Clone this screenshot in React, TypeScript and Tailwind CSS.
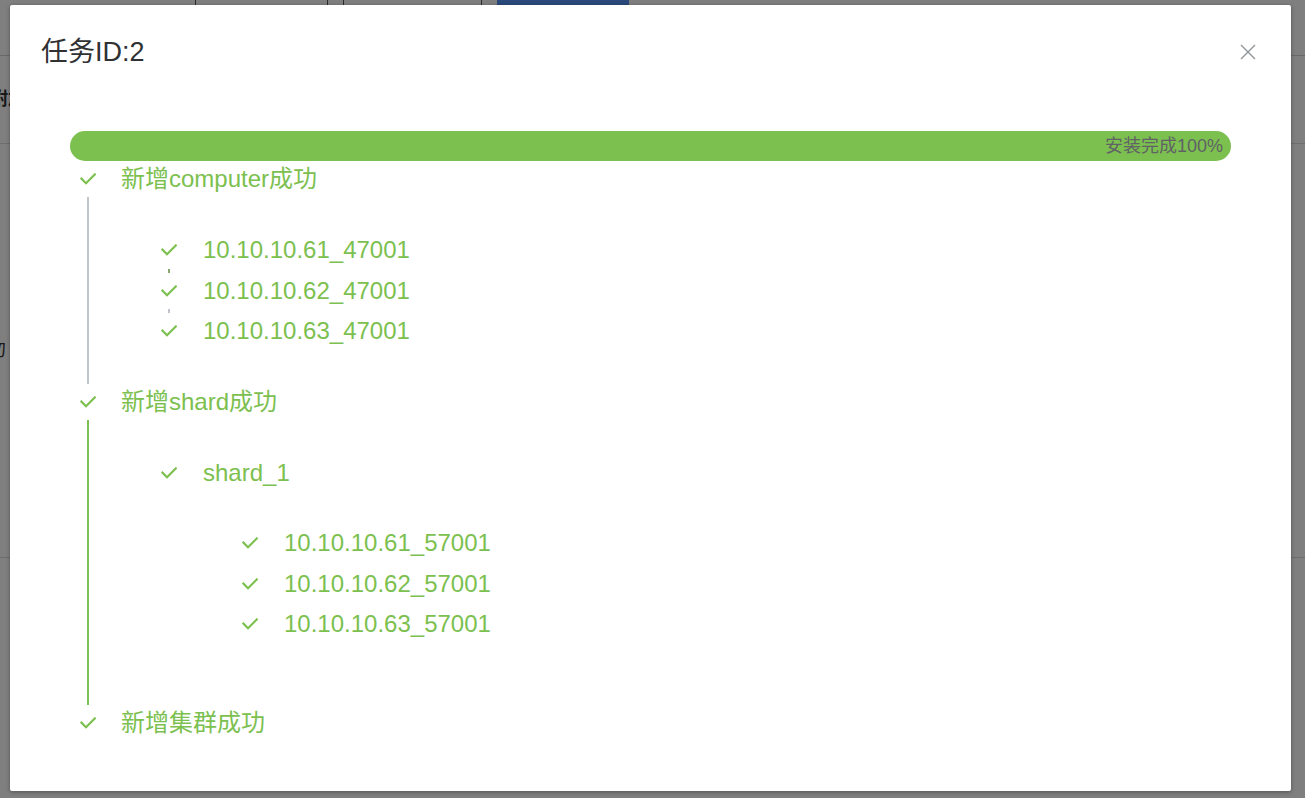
import React from 'react';

// 安装进度弹窗（遮罩下面是原页面的一角）

interface StepNode {
  label: string;
  children?: StepNode[];
}

const steps: StepNode[] = [
  {
    label: '新增computer成功',
    children: [
      { label: '10.10.10.61_47001' },
      { label: '10.10.10.62_47001' },
      { label: '10.10.10.63_47001' },
    ],
  },
  {
    label: '新增shard成功',
    children: [
      {
        label: 'shard_1',
        children: [
          { label: '10.10.10.61_57001' },
          { label: '10.10.10.62_57001' },
          { label: '10.10.10.63_57001' },
        ],
      },
    ],
  },
  { label: '新增集群成功' },
];

const FONT = "font-['Liberation_Sans','Noto_Sans_CJK_SC',sans-serif]";

function CheckIcon() {
  return (
    <svg width="16" height="12" viewBox="0 0 16 12" fill="none" className="shrink-0">
      <path d="M1.4 5.6 L6 10.2 L14.8 1.4" stroke="#7cc04f" strokeWidth="2.1" strokeLinecap="square" />
    </svg>
  );
}

function SubRow({ label, connector }: { label: string; connector?: 'green' | 'gray' }) {
  return (
    <div className="relative flex h-[40.5px] items-center">
      <CheckIcon />
      <span className="ml-[26px] text-[24px] text-[#7cc04f]">{label}</span>
      {connector && (
        <span
          className={
            connector === 'green'
              ? 'absolute bottom-[-2px] left-[7px] h-[4px] w-[2px] bg-[#8aa86e]'
              : 'absolute bottom-[-2px] left-[7px] h-[4px] w-[2px] bg-[#c0c4cc]'
          }
        />
      )}
    </div>
  );
}

function LevelTwo({ node }: { node: StepNode }) {
  return (
    <div>
      <SubRow label={node.label} />
      {node.children && (
        <div className="pl-[81px] pt-[30px] pb-[28px]">
          {node.children.map((c) => (
            <SubRow key={c.label} label={c.label} />
          ))}
        </div>
      )}
    </div>
  );
}

function Timeline() {
  return (
    <div className="ml-[10px]">
      {steps.map((step, i) => (
        <div key={step.label}>
          <div className="flex h-9 items-center">
            <CheckIcon />
            <span className="ml-[25px] text-[24px] text-[#7cc04f]">{step.label}</span>
          </div>
          {step.children && (
            <div
              className={
                i === 0
                  ? 'ml-[7px] border-l-2 border-[#c0c4cc] pl-[72px] pt-[33px] pb-[32px]'
                  : 'ml-[7px] border-l-2 border-[#7cc04f] pl-[72px] pt-[33px] pb-[32px]'
              }
            >
              {step.children.map((c, j) =>
                c.children ? (
                  <LevelTwo key={c.label} node={c} />
                ) : (
                  <SubRow
                    key={c.label}
                    label={c.label}
                    connector={j === 0 ? 'green' : j === 1 ? 'gray' : undefined}
                  />
                )
              )}
            </div>
          )}
        </div>
      ))}
    </div>
  );
}

function BackgroundPage() {
  return (
    <div className={`h-[798px] w-full overflow-hidden bg-white ${FONT}`}>
      <div className="flex h-[56px] border-b border-[#cfd3da]">
        <div className="w-[196px] border-r border-[#555]" />
        <div className="w-[132px] border-r border-[#555]" />
        <div className="w-[16px] border-r border-[#555]" />
        <div className="w-[138px] border-r border-[#555]" />
        <div className="ml-[15px] w-[132px] bg-[#5494f6]" />
      </div>
      <div className="flex h-[88px] items-center border-b border-[#d8dce3] text-[18px] font-bold text-[#333]">
        <span className="-ml-[10px]">附加</span>
      </div>
      <div className="flex h-[414px] items-center border-b border-[#d8dce3] text-[18px] text-[#333]">
        <span className="-ml-[12px] mt-[0px]">勿</span>
      </div>
    </div>
  );
}

export default function App() {
  return (
    <div className="relative h-[798px] w-full overflow-hidden">
      <BackgroundPage />
      <div className="absolute inset-0 bg-black/50" />
      <div
        className={`absolute left-[10px] top-[5px] h-[786px] w-[1281px] rounded-[2px] bg-white shadow-[0_1px_4px_rgba(0,0,0,0.35)] ${FONT}`}
      >
        <div className="flex items-center justify-between pl-[31px] pr-[35px] pt-[30px]">
          <h1 className="text-[27px] leading-[34px] text-[#303133]">任务ID:2</h1>
          <svg width="16" height="16" viewBox="0 0 16 16" className="mt-[-1px]">
            <path d="M1 1 L15 15 M15 1 L1 15" stroke="#909399" strokeWidth="1.4" />
          </svg>
        </div>
        <div className="px-[60px] pt-[62px]">
          <div className="flex h-[30px] items-center justify-end rounded-full bg-[#7cc04f] pr-[8px]">
            <span className="text-[18px] text-[#606266]">安装完成100%</span>
          </div>
          <Timeline />
        </div>
      </div>
    </div>
  );
}
